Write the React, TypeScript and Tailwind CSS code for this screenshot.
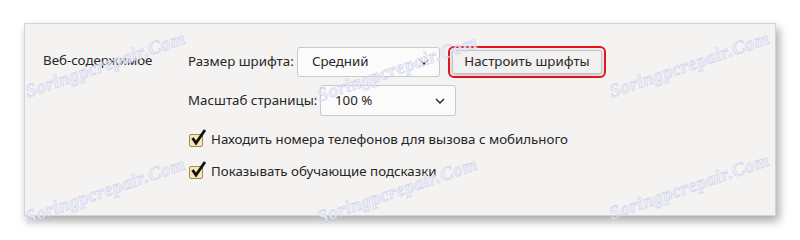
import React from "react";

const font = { fontFamily: '"Noto Sans", "Open Sans", sans-serif' };

function Chevron() {
  return (
    <svg width="10" height="6" viewBox="0 0 10 6" className="shrink-0">
      <path d="M1 1 L5 5 L9 1" fill="none" stroke="#222" strokeWidth="1.4" />
    </svg>
  );
}

function Check() {
  return (
    <div className="relative w-[14px] h-[13px] shrink-0">
      <div className="absolute left-0 top-0 w-[14px] h-[13px] rounded-[2px] border border-[#a08a5a] bg-[#f7e7b4]" />
      <svg className="absolute left-[1px] top-[-6px]" width="17" height="19" viewBox="0 0 17 19">
        <path d="M2.5 10 L6 15 L15 2" fill="none" stroke="#111" strokeWidth="2.8" strokeLinejoin="miter" />
      </svg>
    </div>
  );
}

function Watermark({ x, y }: { x: number; y: number }) {
  return (
    <div
      className="absolute pointer-events-none select-none whitespace-nowrap text-[19px] italic tracking-[0.5px] text-[#eceefa] origin-left"
      style={{
        left: x,
        top: y,
        transform: "rotate(-19deg)",
        fontFamily: '"Liberation Serif", serif',
        WebkitTextStroke: "0.5px #c3c8e8",
        fontWeight: 700,
        opacity: 0.85,
      }}
    >
      Soringpcrepair.Com
    </div>
  );
}

export default function App() {
  return (
    <div className="w-[800px] h-[240px] bg-white relative overflow-hidden" style={font}>
      <div className="absolute left-0 top-0 pt-[23px] pl-[24px]">
        <div className="w-[752px] h-[193px] bg-[#f4f3f2] border border-[#d4d4d4] shadow-[3px_5px_9px_rgba(0,0,0,0.35)] pt-[22px] pl-[18px] flex text-[13.3px] text-[#262626]">
          <div className="w-[145px] h-[30px] flex items-center">Веб-содержимое</div>
          <div className="flex flex-col">
            <div className="flex items-center h-[31px]">
              <span className="w-[109px] whitespace-nowrap">Размер шрифта:</span>
              <div className="w-[143px] h-[30px] rounded-[3px] border border-[#c9c9c9] bg-[#fbfbfb] flex items-center justify-between pl-[14px] pr-[10px]">
                <span>Средний</span>
                <Chevron />
              </div>
              <div className="ml-[8px] w-[158px] h-[32px] rounded-[6px] border-2 border-[#e0161e] p-[2px] flex">
                <div className="flex-1 rounded-[3px] border border-[#c4c4c4] bg-[#f2f1f0] shadow-[0_1px_3px_rgba(0,0,0,0.25)] flex items-center justify-center">
                  Настроить шрифты
                </div>
              </div>
            </div>
            <div className="flex items-center h-[31px] mt-[8px]">
              <span className="w-[132px] whitespace-nowrap">Масштаб страницы:</span>
              <div className="w-[136px] h-[31px] rounded-[3px] border border-[#c9c9c9] bg-[#fbfbfb] flex items-center justify-between pl-[14px] pr-[10px]">
                <span>100 %</span>
                <Chevron />
              </div>
            </div>
            <div className="flex items-center gap-[8px] mt-[14px] h-[20px] pl-[1px]">
              <Check />
              <span>Находить номера телефонов для вызова с мобильного</span>
            </div>
            <div className="flex items-center gap-[8px] mt-[12px] h-[20px] pl-[1px]">
              <Check />
              <span>Показывать обучающие подсказки</span>
            </div>
          </div>
        </div>
      </div>
      <Watermark x={26} y={78} />
      <Watermark x={318} y={82} />
      <Watermark x={610} y={78} />
      <Watermark x={26} y={204} />
      <Watermark x={318} y={204} />
      <Watermark x={610} y={200} />
    </div>
  );
}
